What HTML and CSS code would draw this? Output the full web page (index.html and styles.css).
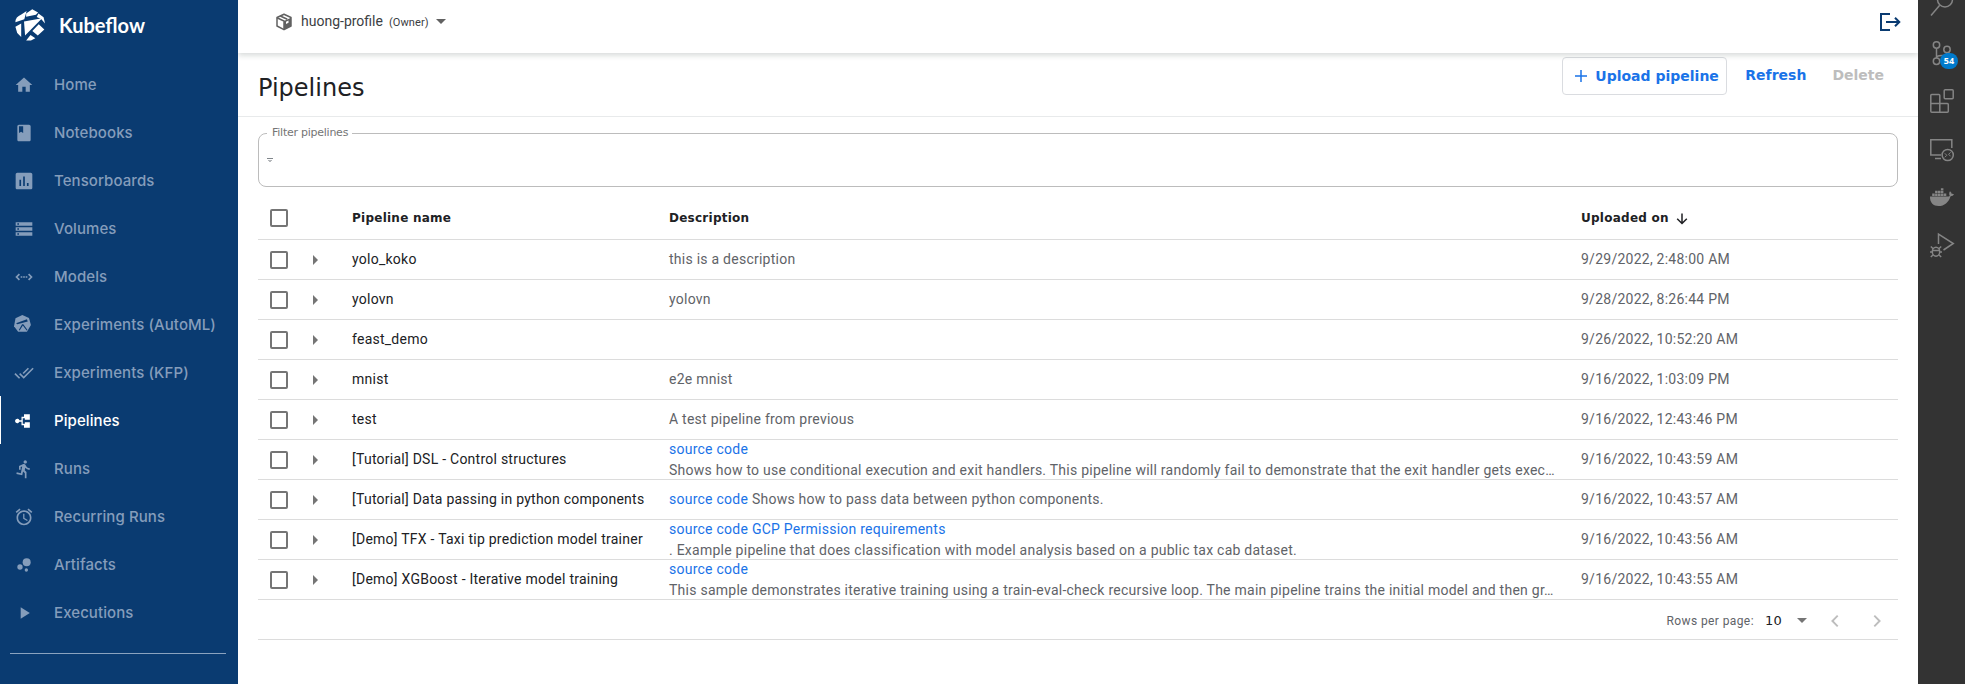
FILE: index.html
```html
<!DOCTYPE html>
<html lang="en">
<head>
<meta charset="utf-8">
<title>Kubeflow Pipelines</title>
<link rel="stylesheet" href="styles.css">
</head>
<body>
<div class="app">
  <nav class="sidebar">
    <div class="brand">
      <svg class="logo" width="31" height="32" viewBox="0 0 32 32" fill="#fff" preserveAspectRatio="none"><path d="M6.500 5.600 12 1.900 9.600 10.200.4 13.200Q.4 8 6.500 5.600ZM11.500 4.500 17.800.3 23.800 3.500 21.600 5.700 11.500 7.700ZM24.200 4.400 29.500 8.200 31 14.400 27 9.900 22.400 8ZM9.300 12.400 28 9.300 10.400 26.500ZM.4 17.700 6.400 14.600V28L2.300 24ZM17.900 22 24.500 15.300 30.300 20.500 23.500 26.500ZM16 26 21 29.300 16.500 31.500H11.500Z"/></svg>
      <span class="brand-name">Kubeflow</span>
    </div>
    <a class="item"><svg viewBox="0 0 24 24"><path d="M10 20v-6h4v6h5v-8h3L12 3 2 12h3v8z"/></svg><span>Home</span></a>
    <a class="item"><svg viewBox="0 0 24 24"><path d="M18 2H6c-1.100 0-2 .9-2 2v16c0 1.100.9 2 2 2h12c1.100 0 2-.9 2-2V4c0-1.100-.9-2-2-2zM6 4h5v8l-2.500-1.500L6 12V4z"/></svg><span>Notebooks</span></a>
    <a class="item"><svg viewBox="0 0 24 24"><path d="M20 2H4c-1.100 0-2 .9-2 2v16c0 1.100.9 2 2 2h16c1.100 0 2-.9 2-2V4c0-1.100-.9-2-2-2zM8.500 18h-2v-7.500h2V18zm4.500 0h-2V6.500h2V18zm4.500 0h-2v-3.500h2V18z"/></svg><span>Tensorboards</span></a>
    <a class="item"><svg viewBox="0 0 24 24"><path d="M2 20h20v-4H2v4zm2-3h2v2H4v-2zM2 4v4h20V4H2zm4 3H4V5h2v2zm-4 7h20v-4H2v4zm2-3h2v2H4v-2z"/></svg><span>Volumes</span></a>
    <a class="item"><svg viewBox="0 0 24 24"><path d="M6.500 8.500 3 12l3.500 3.500M17.500 8.500 21 12l-3.500 3.500M8 12h2M11 12h2M14 12h2" fill="none" stroke="currentColor" stroke-width="2"/></svg><span>Models</span></a>
    <a class="item"><svg viewBox="0 0 24 24"><path d="M10 0 18 3.500 20.300 12 15.500 20H5L0 13.500 1.800 4Z"/><path class="cut" d="M2.500 9.800 15.500 5.200 16.500 7.800 4 11.200ZM9.700 11h1.500l5 7-1 .6-4.600-6.100-3.800 6.100-1-.6Z"/></svg><span>Experiments (AutoML)</span></a>
    <a class="item"><svg viewBox="0 0 24 24"><path d="M18 7l-1.410-1.410-6.340 6.340 1.410 1.410L18 7zm4.240-1.410L11.660 16.170 7.480 12l-1.410 1.410L11.660 19l12-12-1.420-1.410zM.41 13.410 6 19l1.410-1.410L1.830 12 .41 13.410z"/></svg><span>Experiments (KFP)</span></a>
    <a class="item active"><svg viewBox="0 0 24 24"><path d="M12 4h7v6.500h-6V8.700h-2.500v6.600H13v-1.800h6V20h-7v-3H9v-4H6.500A2.700 2.700 0 1 1 6.500 11H9V7h3Z"/></svg><span>Pipelines</span></a>
    <a class="item"><svg viewBox="0 0 24 24"><path d="M13.490 5.480c1.100 0 2-.9 2-2s-.9-2-2-2-2 .9-2 2 .9 2 2 2zm-3.600 13.900 1-4.400 2.100 2v6h2v-7.500l-2.100-2 .6-3c1.300 1.500 3.300 2.500 5.500 2.500v-2c-1.900 0-3.500-1-4.300-2.400l-1-1.600c-.4-.6-1-1-1.700-1-.3 0-.5.1-.8.1l-5.200 2.200v4.700h2v-3.400l1.800-.7-1.600 8.100-4.900-1-.4 2 7 1.400z"/></svg><span>Runs</span></a>
    <a class="item"><svg viewBox="0 0 24 24"><path d="M22 5.720l-4.600-3.860-1.290 1.530 4.600 3.860L22 5.720zM7.880 3.390 6.600 1.860 2 5.710l1.290 1.530 4.590-3.850zM12.500 8H11v6l4.750 2.850.75-1.230-4-2.370V8zM12 4c-4.970 0-9 4.030-9 9s4.020 9 9 9c4.970 0 9-4.030 9-9s-4.030-9-9-9zm0 16c-3.870 0-7-3.130-7-7s3.130-7 7-7 7 3.130 7 7-3.130 7-7 7z"/></svg><span>Recurring Runs</span></a>
    <a class="item"><svg viewBox="0 0 24 24"><circle cx="7.200" cy="14.400" r="3.200"/><circle cx="14.800" cy="18" r="2"/><circle cx="15.200" cy="8.800" r="4.800"/></svg><span>Artifacts</span></a>
    <a class="item"><svg viewBox="0 0 24 24"><path d="M8 5v14l11-7z"/></svg><span>Executions</span></a>
    <div class="rule"></div>
  </nav>

  <main class="content">
    <header class="topbar">
      <svg class="cube" width="18" height="18" viewBox="0 0 18 18"><path d="M9 1.200 16 4.500V13L9 16.700 2 13V4.500Z" fill="none" stroke="#616161" stroke-width="1.500" stroke-linejoin="round"/><path d="M2 4.700 9 8v8.500M5.300 3l7 3.300" fill="none" stroke="#616161" stroke-width="1.500"/><path d="M9 8 16 4.700V13L9 16.700Z" fill="#616161"/><path d="M11 8.800l2.500-1.200v2.200L11 11Z" fill="#fff"/></svg>
      <span class="profile">huong-profile</span>
      <span class="owner">(Owner)</span>
      <svg class="caret" width="10" height="5" viewBox="0 0 10 5"><path d="M0 0h10L5 5Z" fill="#616161"/></svg>
      <svg class="logout" width="22" height="20" viewBox="0 0 22 20" fill="none" stroke="#0a3b71" stroke-width="2"><path d="M11 2H2v16h9M7 10H20M16 5.700 20.300 10 16 14.300"/></svg>
    </header>

    <section class="pagehead">
      <h1>Pipelines</h1>
      <div class="actions">
        <button class="upload"><svg width="12" height="12" viewBox="0 0 12 12"><path d="M6 0v12M0 6h12" stroke="#1a73e8" stroke-width="1.500"/></svg><span>Upload pipeline</span></button>
        <span class="refresh">Refresh</span>
        <span class="delete">Delete</span>
      </div>
    </section>

    <fieldset class="filter">
      <legend>Filter pipelines</legend>
      <svg width="6" height="5" viewBox="0 0 6 5"><path d="M0 .5h6" stroke="#80868b"/><path d="M1 2.500h4M2 3.500h2" stroke="#b5b8bb"/></svg>
    </fieldset>

    <div class="table">
      <div class="row head">
        <i class="box"></i><i class="arrow none"></i><b class="name">Pipeline name</b><b class="desc">Description</b><b class="date">Uploaded on<svg width="12" height="12" viewBox="0 0 12 12" fill="none" stroke="#202124" stroke-width="1.500"><path d="M6 .5v10M1.200 5.700 6 10.500l4.800-4.800"/></svg></b>
      </div>
      <div class="row"><i class="box"></i><i class="arrow"></i><span class="name">yolo_koko</span><span class="desc">this is a description</span><span class="date">9/29/2022, 2:48:00 AM</span></div>
      <div class="row"><i class="box"></i><i class="arrow"></i><span class="name">yolovn</span><span class="desc">yolovn</span><span class="date">9/28/2022, 8:26:44 PM</span></div>
      <div class="row"><i class="box"></i><i class="arrow"></i><span class="name">feast_demo</span><span class="desc"></span><span class="date">9/26/2022, 10:52:20 AM</span></div>
      <div class="row"><i class="box"></i><i class="arrow"></i><span class="name">mnist</span><span class="desc">e2e mnist</span><span class="date">9/16/2022, 1:03:09 PM</span></div>
      <div class="row"><i class="box"></i><i class="arrow"></i><span class="name">test</span><span class="desc">A test pipeline from previous</span><span class="date">9/16/2022, 12:43:46 PM</span></div>
      <div class="row"><i class="box"></i><i class="arrow"></i><span class="name">[Tutorial] DSL - Control structures</span><span class="desc two"><a>source code</a><br>Shows how to use conditional execution and exit handlers. This pipeline will randomly fail to demonstrate that the exit handler gets exec…</span><span class="date">9/16/2022, 10:43:59 AM</span></div>
      <div class="row"><i class="box"></i><i class="arrow"></i><span class="name">[Tutorial] Data passing in python components</span><span class="desc"><a>source code</a> Shows how to pass data between python components.</span><span class="date">9/16/2022, 10:43:57 AM</span></div>
      <div class="row"><i class="box"></i><i class="arrow"></i><span class="name">[Demo] TFX - Taxi tip prediction model trainer</span><span class="desc two"><a>source code</a> <a>GCP Permission requirements</a><br>. Example pipeline that does classification with model analysis based on a public tax cab dataset.</span><span class="date">9/16/2022, 10:43:56 AM</span></div>
      <div class="row"><i class="box"></i><i class="arrow"></i><span class="name">[Demo] XGBoost - Iterative model training</span><span class="desc two"><a>source code</a><br>This sample demonstrates iterative training using a train-eval-check recursive loop. The main pipeline trains the initial model and then gr…</span><span class="date">9/16/2022, 10:43:55 AM</span></div>
      <div class="row pager">
        <span class="rpp">Rows per page:</span>
        <span class="count">10</span>
        <svg class="pcaret" width="10" height="5" viewBox="0 0 10 5"><path d="M0 0h10L5 5Z" fill="#757575"/></svg>
        <svg class="prev" width="8" height="12" viewBox="0 0 8 12"><path d="M6.700.7 1.400 6l5.300 5.300" fill="none" stroke="#bdbdbd" stroke-width="1.900"/></svg>
        <svg class="next" width="8" height="12" viewBox="0 0 8 12"><path d="M1.300.7 6.600 6l-5.300 5.300" fill="none" stroke="#bdbdbd" stroke-width="1.900"/></svg>
      </div>
    </div>
  </main>

  <aside class="rail">
    <svg viewBox="0 0 24 24"><circle cx="15" cy="6.500" r="7.500"/><path d="M9.700 12.300 1 22.500"/></svg>
    <div class="scm"><svg viewBox="0 0 24 24"><circle cx="6.500" cy="4" r="3.200"/><circle cx="17" cy="8.500" r="3.200"/><circle cx="6.500" cy="20.200" r="3.200"/><path d="M6.500 7.200V17M17 11.700c0 3-3 2.800-5.500 2.800-3 0-5 .5-5 2.500"/></svg><span class="badge">54</span></div>
    <svg viewBox="0 0 24 24"><rect x="14.200" y=".8" width="9" height="9" rx="1"/><path d="M.8 6.500a1 1 0 0 1 1-1h7a1 1 0 0 1 1 1v8h7.500a1 1 0 0 1 1 1v6.700a1 1 0 0 1-1 1H1.800a1 1 0 0 1-1-1ZM.8 14.500h9v8.700"/></svg>
    <svg viewBox="0 0 24 24"><path d="M11 18H.8V2.800h21V11M5 21.500h6"/><circle cx="17.700" cy="18" r="5.600"/><path d="M14.800 16.300l2 2-2 2M20.600 15.300l-2 2 2 2" stroke-width="1"/></svg>
    <svg class="solid" viewBox="0 0 24 24"><path d="M0 11.500h17.800c1.200 0 2-.5 2-.5-.9-1.500-.8-3.500.2-4.800 1.200.8 1.500 1.800 1.600 2.600.9-.2 1.800 0 2.400.5-.6 1.300-1.800 1.900-3.400 1.900C18.500 17.500 14.500 21 8.500 21 3.500 21-.2 18 0 11.500ZM2.200 8.500h2.500v2.500H2.200ZM5.100 8.500h2.500v2.500H5.100ZM8 8.500h2.500v2.500H8ZM10.900 8.500h2.500v2.500h-2.500ZM13.800 8.500h2.500v2.500h-2.500ZM5.100 5.700h2.500v2.400H5.100ZM8 5.700h2.500v2.400H8ZM10.900 5.700h2.500v2.400h-2.500ZM10.900 3.200h2.500v2.100h-2.500Z"/></svg>
    <svg viewBox="0 0 24 24"><path d="M8.500 11V1L23.300 10.500 13.500 17"/><ellipse cx="6" cy="18.700" rx="3.700" ry="4.500"/><path d="M2.300 17.500h7.400M0 18.900h2.300M9.700 18.900H12M.8 13.500l2.400 2.200M11.200 13.500l-2.400 2.200M.8 24l2.400-2.300M11.200 24l-2.400-2.300"/></svg>
  </aside>
</div>
</body>
</html>
```
FILE: styles.css
```css
* { box-sizing: border-box; }
body { margin: 0; font-family: Roboto, "Liberation Sans", sans-serif; background: #fff; }
.app { display: flex; width: 1965px; height: 684px; overflow: hidden; }

.sidebar { width: 238px; flex: none; background: #0a3b71; }
.brand { display: flex; align-items: center; height: 60px; padding: 0 0 10px 15px; }
.logo { flex: none; }
.brand-name { margin-left: 13px; font: 700 20px Lato, sans-serif; color: #fff; }
.item { display: flex; align-items: center; height: 48px; padding: 1px 0 0 14px; color: #859dbb; font: 500 15px/18px Inter, sans-serif; letter-spacing: .08px; white-space: nowrap; }
.item svg { width: 20px; height: 20px; margin-right: 20px; fill: currentColor; flex: none; }
.item span { margin-top: 1px; }
.item .cut { fill: #0a3b71; }
.item.active { color: #fff; box-shadow: inset 1px 0 #fff; }
.rule { height: 1px; margin: 17px 12px 0 10px; background: #8ba3bf; }

.content { width: 1680px; flex: none; background: #fff; }
.topbar { display: flex; align-items: center; position: relative; height: 53px; padding: 0 17px 10px 37px; box-shadow: 0 2px 6px rgba(32, 50, 45, .2); clip-path: inset(0 0 -12px 0); }
.profile { margin: -1px 0 0 8px; font-size: 14px; color: #3c4043; }
.owner { margin: 1px 0 0 6px; font-size: 11px; letter-spacing: .1px; color: #3c4043; }
.caret { margin-left: 7px; }
.logout { margin-left: auto; }

.pagehead { display: flex; justify-content: space-between; height: 64px; padding: 0 34px 0 20px; border-bottom: 1px solid #e8eaeb; }
h1 { margin: 19px 0 0; font: 400 24px/32px "DejaVu Sans", "Noto Sans", sans-serif; color: #202124; }
.actions { display: flex; align-items: flex-start; padding-top: 4px; font: 700 14px/20px "DejaVu Sans", sans-serif; color: #1a73e8; }
.upload { display: flex; align-items: center; width: 165px; height: 38px; padding: 0 0 0 12px; border: 1px solid #dadce0; border-radius: 4px; background: #fff; color: inherit; font: inherit; white-space: nowrap; }
.upload svg { margin-right: 8px; flex: none; }
.refresh { margin: 8px 0 0 18px; }
.delete { margin: 8px 0 0 26px; color: #bdbdbd; }

.filter { height: 62px; margin: 8px 20px 0; padding: 0 0 0 8px; border: 1px solid #bcbcbc; border-radius: 8px; }
.filter legend { height: 16px; margin-left: 0; padding: 0 4px 0 5px; font: 11px/16px "DejaVu Sans", sans-serif; letter-spacing: -.25px; color: #757575; }
.filter svg { display: block; margin-top: 17px; }

.table { margin: 0 20px; }
.row { display: flex; align-items: center; height: 40px; border-bottom: 1px solid #dcdcdc; font-size: 14px; letter-spacing: .25px; color: #5f6368; white-space: nowrap; }
.row > span { margin-top: -2px; }
.row > .two { margin-top: 0; line-height: 21px; }
.row.head { height: 53px; padding-top: 9px; }
.box { width: 18px; height: 18px; margin: 1px 0 0 12px; border: 2px solid #757575; border-radius: 2px; flex: none; }
.head .box { margin-top: 0; }
.arrow { width: 5px; height: 10px; margin: 1px 34px 0 25px; background: #757575; clip-path: polygon(0 0, 100% 50%, 0 100%); flex: none; }
.arrow.none { visibility: hidden; }
.name { width: 317px; flex: none; color: #202124; }
.desc { width: 912px; flex: none; }
.row a { color: #1a73e8; }
.head b { font: 700 12px "DejaVu Sans", sans-serif; letter-spacing: .25px; color: #202124; }
.head .date svg { margin-left: 7px; vertical-align: -3px; }
.pager { justify-content: flex-end; padding: 2px 17px 0 0; }
.pager .rpp { margin-top: 0; font-size: 12px; letter-spacing: .4px; color: #5f6368; }
.pager .count { margin: 0 0 0 11px; font: 13px "DejaVu Sans", sans-serif; color: #202124; }
.pcaret { margin-left: 15px; }
.prev { margin-left: 24px; }
.next { margin-left: 34px; }

.rail { display: flex; flex-direction: column; gap: 24px; width: 47px; flex: none; padding-left: 12px; background: #333; }
.rail svg { display: block; width: 24px; height: 24px; fill: none; stroke: #858585; stroke-width: 1.500; flex: none; overflow: visible; }
.rail > svg:first-child { margin-top: -7px; }
.rail .solid { fill: #858585; stroke: none; }
.scm { position: relative; }
.badge { position: absolute; left: 10px; top: 12px; width: 18px; height: 16px; border-radius: 8px; background: #007acc; color: #fff; font: 700 9px/16px "Open Sans", sans-serif; text-align: center; }
```
